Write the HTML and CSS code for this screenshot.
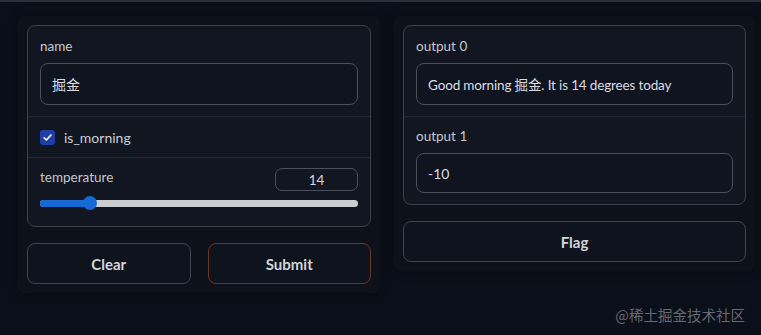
FILE: index.html
```html
<!DOCTYPE html>
<html>
<head>
<meta charset="utf-8">
<link rel="stylesheet" href="styles.css">
</head>
<body>
<div class="topline"></div>
<main class="app">
  <section class="panel panel-left">
    <div class="card">
      <div class="block">
        <div class="label">name</div>
        <div class="textbox">掘金</div>
      </div>
      <div class="block block-check">
        <span class="checkbox">
          <svg width="11" height="11" viewBox="0 0 12 12"><path d="M2.3 6.3 L4.8 8.7 L9.8 3.3" fill="none" stroke="#fff" stroke-width="1.8" stroke-linecap="round" stroke-linejoin="round"/></svg>
        </span>
        <span class="check-label">is_morning</span>
      </div>
      <div class="block block-slider">
        <div class="slider-head">
          <div class="label">temperature</div>
          <div class="numbox">14</div>
        </div>
        <div class="slider">
          <div class="track"></div>
          <div class="fill" style="width:50px"></div>
          <div class="thumb" style="left:43px"></div>
        </div>
      </div>
    </div>
    <div class="buttons">
      <button class="btn">Clear</button>
      <button class="btn btn-primary">Submit</button>
    </div>
  </section>
  <section class="panel panel-right">
    <div class="card">
      <div class="block">
        <div class="label">output 0</div>
        <div class="textbox textbox-out">Good morning 掘金. It is 14 degrees today</div>
      </div>
      <div class="block block-out1">
        <div class="label">output 1</div>
        <div class="textbox textbox-sm">-10</div>
      </div>
    </div>
    <div class="buttons">
      <button class="btn btn-wide">Flag</button>
    </div>
  </section>
</main>
<div class="watermark">@稀土掘金技术社区</div>
</body>
</html>
```
FILE: styles.css
```css
* { box-sizing: border-box; }
html, body { margin: 0; padding: 0; }
body {
  width: 761px;
  height: 335px;
  background: #0b0f19;
  font-family: Lato, "Noto Sans CJK SC", sans-serif;
  color: #c9cdd4;
  overflow: hidden;
  position: relative;
}
.topline {
  height: 2px;
  background: #2b2e36;
}
.app {
  display: flex;
  align-items: flex-start;
  gap: 14px;
  padding: 14px 6px 0 18px;
}
.panel {
  background: #0d111a;
  box-shadow: 0 0 12px rgba(0,0,0,0.3);
  border-radius: 6px;
  padding: 9px;
  display: flex;
  flex-direction: column;
  gap: 16px;
}
.panel-left { width: 362px; }
.panel-right { width: 361px; }
.card {
  border: 1px solid #3b404b;
  border-radius: 8px;
  background: #121621;
}
.block {
  padding: 11px 12px 11px 12px;
  border-bottom: 1px solid #242834;
}
.block:last-child { border-bottom: none; }
.label {
  font-size: 13.5px;
  line-height: 18px;
  color: #c4c8cf;
  margin-bottom: 8px;
}
.textbox {
  height: 42px;
  border: 1px solid #4a4f5b;
  border-radius: 8px;
  background: #10141f;
  padding: 0 11px;
  display: flex;
  align-items: center;
  font-size: 14px;
  color: #d8dce2;
}
.textbox-out {
  font-size: 13.5px;
  letter-spacing: -0.15px;
}
.textbox-sm { height: 40px; }
.block-out1 { padding-top: 10px; padding-bottom: 11px; }
.block-check {
  display: flex;
  align-items: center;
  gap: 9px;
  height: 41px;
  padding-top: 10px;
  padding-bottom: 10px;
}
.checkbox {
  width: 15px;
  height: 15px;
  border-radius: 3px;
  background: #1e3fa8;
  display: flex;
  align-items: center;
  justify-content: center;
}
.check-label {
  font-size: 14px;
  color: #c9cdd4;
}
.block-slider { padding-top: 10px; padding-bottom: 16px; }
.slider-head {
  display: flex;
  justify-content: space-between;
  align-items: flex-start;
  height: 23px;
}
.slider-head .label { margin: 0; }
.numbox {
  width: 83px;
  height: 23px;
  border: 1px solid #4a4f5b;
  border-radius: 7px;
  font-size: 13.5px;
  color: #d3d6dc;
  display: flex;
  align-items: center;
  justify-content: center;
}
.slider {
  position: relative;
  height: 14px;
  margin-top: 5px;
}
.track {
  position: absolute;
  left: 0; right: 0;
  top: 4px;
  height: 7px;
  border-radius: 4px;
  background: #ccced2;
}
.fill {
  position: absolute;
  left: 0;
  top: 4px;
  height: 7px;
  border-radius: 4px;
  background: #1769d6;
}
.thumb {
  position: absolute;
  top: 0;
  width: 14px;
  height: 14px;
  border-radius: 50%;
  background: #1769d6;
}
.buttons {
  display: flex;
  gap: 17px;
}
.btn {
  flex: 1;
  height: 41px;
  border: 1px solid #3f4450;
  border-radius: 8px;
  background: #0f131d;
  color: #d1d5db;
  font-family: Lato, sans-serif;
  font-weight: 700;
  font-size: 15px;
}
.btn-primary { border-color: #6b3522; }
.watermark {
  position: absolute;
  right: 16px;
  top: 304px;
  font-family: "Noto Sans CJK SC", sans-serif;
  font-size: 14.5px;
  color: #666972;
}
```
